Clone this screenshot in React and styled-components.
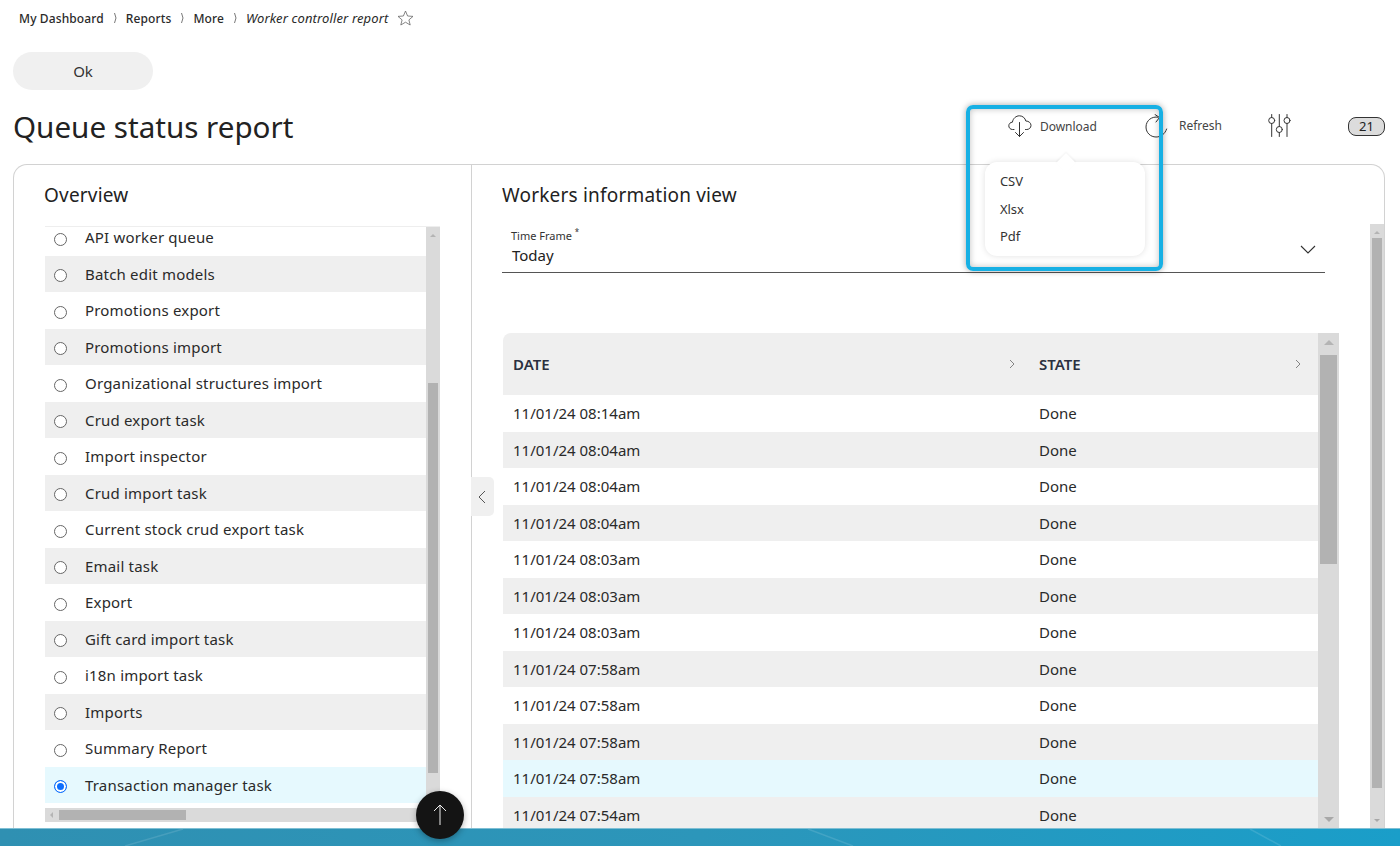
import React from 'react';
import styled, { createGlobalStyle } from 'styled-components';

const GlobalStyle = createGlobalStyle`
  html, body {
    margin: 0;
    height: 100%;
    overflow: hidden;
    background: #fff;
  }
  * {
    box-sizing: border-box;
  }
  body {
    font-family: "Noto Sans", "Open Sans", sans-serif;
    color: #222;
  }
`;

const Page = styled.div`
  position: relative;
  width: 1400px;
  height: 846px;
  overflow: hidden;
  padding: 0 15px 0 13px;
`;

const Breadcrumb = styled.nav`
  display: flex;
  align-items: center;
  height: 36px;
  padding-left: 6px;
  font-size: 12px;
  color: #2a2a2a;
`;

const Crumb = styled.span`
  font-weight: 500;
  letter-spacing: 0.01em;
`;

const CurrentCrumb = styled.span`
  font-size: 13px;
  font-style: italic;
  font-weight: 400;
  letter-spacing: 0.01em;
`;

const CrumbSep = styled.svg`
  width: 6px;
  height: 12px;
  margin: 0 7px 0 9px;
  fill: none;
  stroke: #555;
  stroke-width: 0.8;
`;

const StarIcon = styled.svg`
  width: 17px;
  height: 16px;
  margin-left: 9px;
  fill: none;
  stroke: #666;
  stroke-width: 0.8;
`;

const OkButton = styled.button`
  display: block;
  width: 140px;
  height: 38px;
  margin-top: 16px;
  border: 0;
  border-radius: 19px;
  background: #f0f0f0;
  color: #333;
  font: 400 15px "Noto Sans", sans-serif;
`;

const HeaderRow = styled.div`
  display: flex;
  justify-content: space-between;
  align-items: center;
  height: 74px;
  padding-bottom: 2px;
`;

const Title = styled.h1`
  margin: 0;
  font-size: 29.6px;
  font-weight: 400;
  color: #222;
`;

const Actions = styled.div`
  position: relative;
  display: flex;
  align-items: center;
  height: 40px;
`;

const Action = styled.div`
  display: flex;
  align-items: center;
  gap: ${(props) => props.$gap}px;
  margin-right: ${(props) => props.$right}px;
  font-size: 12px;
  color: #444;
`;

const RefreshLabel = styled.span`
  margin-top: -2px;
`;

const ActionIcon = styled.svg`
  fill: none;
  stroke: #333;
  stroke-width: 1;
  stroke-linecap: round;
  stroke-linejoin: round;
`;

const Badge = styled.span`
  display: flex;
  align-items: center;
  justify-content: center;
  width: 37px;
  height: 19px;
  border: 1px solid #333;
  border-radius: 8px;
  background: #dcdcdc;
  font-size: 13px;
  color: #222;
`;

const Highlight = styled.div`
  position: absolute;
  left: -42px;
  top: -1px;
  width: 197px;
  height: 166px;
  border: 4px solid #17b0e4;
  border-radius: 7px;
  box-shadow: 0 0 6px rgba(0, 0, 0, 0.35), inset 0 0 6px rgba(0, 0, 0, 0.25);
  z-index: 3;
  pointer-events: none;
`;

const Menu = styled.div`
  position: absolute;
  left: -23px;
  top: 56px;
  width: 160px;
  height: 94px;
  padding: 6px 15px;
  background: #fff;
  border-radius: 12px;
  box-shadow: 0 0 6px rgba(0, 0, 0, 0.12);
  z-index: 2;

  &::before {
    content: '';
    position: absolute;
    left: 74px;
    top: -6px;
    width: 14px;
    height: 14px;
    background: #fff;
    transform: rotate(45deg);
    box-shadow: -1px -1px 2px rgba(0, 0, 0, 0.05);
  }
`;

const MenuItem = styled.div`
  position: relative;
  height: 27.5px;
  line-height: 27px;
  font-size: 13px;
  color: #333;
`;

const Card = styled.section`
  display: flex;
  height: 670px;
  border: 1px solid #d2d2d2;
  border-bottom: 0;
  border-radius: 14px 14px 0 0;
  overflow: hidden;
`;

const LeftPanel = styled.div`
  position: relative;
  flex: 0 0 458px;
  padding-left: 31px;
  border-right: 1px solid #d2d2d2;
`;

const PanelTitle = styled.h2`
  display: flex;
  align-items: center;
  height: 61px;
  margin: 0 0 0 ${(props) => props.$shift || 0}px;
  padding-bottom: 2px;
  font-size: 19px;
  font-weight: 400;
  letter-spacing: 0.2px;
  color: #222;
`;

const ListFrame = styled.div`
  position: relative;
  width: 395px;
  height: 596px;
  overflow: hidden;
  border-top: 1px solid #eee;
`;

const ListScroll = styled.div`
  margin-top: -8px;
  width: 381px;
`;

const ListRow = styled.div`
  display: flex;
  align-items: center;
  height: 36.5px;
  padding-left: 9px;
  font-size: 15px;
  letter-spacing: 0.19px;
  color: #2a2a2a;
  background: ${(props) =>
    props.$selected ? '#e6f9fe' : props.$alt ? '#efefef' : '#fff'};
`;

const Radio = styled.span`
  flex: none;
  width: 13px;
  height: 13px;
  margin-right: 18px;
  margin-top: 4px;
  border-radius: 50%;
  border: 1px solid ${(props) => (props.$checked ? '#0d6efd' : '#666')};
  background: ${(props) => (props.$checked ? '#0d6efd' : '#fff')};
  box-shadow: ${(props) => (props.$checked ? 'inset 0 0 0 2px #fff' : 'none')};
`;

const VTrack = styled.div`
  position: absolute;
  top: 0;
  right: 0;
  bottom: 0;
  width: ${(props) => props.$width}px;
  background: #dadada;
`;

const Arrow = styled.span`
  position: absolute;
  left: 50%;
  margin-left: -${(props) => props.$size}px;
  width: 0;
  height: 0;
  border-left: ${(props) => props.$size}px solid transparent;
  border-right: ${(props) => props.$size}px solid transparent;
  ${(props) =>
    props.$down
      ? `bottom: 7px; border-top: ${props.$size}px solid #a8a8a8;`
      : `top: 7px; border-bottom: ${props.$size}px solid #b4b4b4;`}
`;

const VThumb = styled.div`
  position: absolute;
  left: 2px;
  right: 2px;
  top: ${(props) => props.$top}px;
  height: ${(props) => props.$height}px;
  background: #b2b2b2;
`;

const HTrack = styled.div`
  position: absolute;
  left: 0;
  bottom: 0;
  width: 381px;
  height: 14px;
  background: #dadada;
`;

const HArrow = styled.span`
  position: absolute;
  left: 5px;
  top: 4px;
  border-top: 3px solid transparent;
  border-bottom: 3px solid transparent;
  border-right: 3px solid #b4b4b4;
`;

const HThumb = styled.div`
  position: absolute;
  left: 14px;
  top: 2px;
  width: 127px;
  height: 10px;
  background: #b2b2b2;
`;

const CollapseTab = styled.div`
  position: absolute;
  right: -23px;
  top: 312px;
  width: 23px;
  height: 39px;
  display: flex;
  align-items: center;
  justify-content: center;
  background: #f0f0f0;
  border-radius: 0 5px 5px 0;
`;

const TabIcon = styled.svg`
  width: 8px;
  height: 14px;
  margin-right: 2px;
  fill: none;
  stroke: #555;
  stroke-width: 1;
`;

const RightPanel = styled.div`
  position: relative;
  flex: 1;
  padding-left: 30px;
`;

const FieldLabel = styled.div`
  margin-top: 2px;
  padding-left: 9px;
  font-size: 11px;
  line-height: 15px;
  color: #333;
  height: 15px;

  sup {
    font-size: 8px;
    line-height: 0;
  }
`;

const Field = styled.div`
  position: relative;
  width: 823px;
  height: 30px;
  border-bottom: 1px solid #555;
`;

const FieldValue = styled.div`
  padding: 1px 0 0 10px;
  font-size: 15px;
  line-height: 22px;
  color: #222;
`;

const FieldChevron = styled.svg`
  position: absolute;
  right: 9px;
  top: 2px;
  width: 16px;
  height: 9px;
  fill: none;
  stroke: #333;
  stroke-width: 1.1;
`;

const TableFrame = styled.div`
  position: relative;
  width: 836px;
  height: 496px;
  margin: 60px 0 0 1px;
  overflow: hidden;
  border-radius: 8px 0 0 0;
`;

const HeadRow = styled.div`
  display: grid;
  grid-template-columns: 526px 289px;
  width: 815px;
  height: 62px;
  background: #efefef;
`;

const HeadCell = styled.div`
  display: flex;
  align-items: center;
  justify-content: space-between;
  padding: 0 ${(props) => props.$right}px 0 10px;
  font-size: 15px;
  font-weight: 600;
  color: #2b3040;
`;

const SortIcon = styled.svg`
  width: 6px;
  height: 10px;
  fill: none;
  stroke: #777;
  stroke-width: 0.9;
`;

const BodyRow = styled.div`
  display: grid;
  grid-template-columns: 526px 289px;
  width: 815px;
  height: 36.5px;
  align-items: center;
  font-size: 15px;
  color: #2a2a2a;
  background: ${(props) =>
    props.$selected ? '#e6f9fe' : props.$alt ? '#efefef' : '#fff'};
`;

const BodyCell = styled.div`
  padding-left: 10px;
`;

const PageScroll = styled.div`
  position: absolute;
  right: 0;
  top: 59px;
  height: 605px;
  width: 14px;
  background: #dadada;
`;

const Footer = styled.div`
  position: absolute;
  left: 0;
  right: 0;
  bottom: 0;
  height: 18px;
  border-top: 1px solid #7fbfd4;
  background: linear-gradient(90deg, #2f90b2 0%, #2c96ba 50%, #1a9ec9 100%);
  z-index: 4;
`;

const FooterWaves = styled.svg`
  display: block;
  width: 1400px;
  height: 17px;
  fill: none;
  stroke: rgba(255, 255, 255, 0.12);
  stroke-width: 1.5;
`;

const ToTop = styled.div`
  position: absolute;
  left: 416px;
  top: 791px;
  width: 48px;
  height: 48px;
  display: flex;
  align-items: center;
  justify-content: center;
  border-radius: 50%;
  background: #141414;
  box-shadow: 0 2px 6px rgba(0, 0, 0, 0.3);
  z-index: 5;
`;

const ToTopIcon = styled.svg`
  width: 14px;
  height: 22px;
  fill: none;
  stroke: #eee;
  stroke-width: 1;
`;

const tasks = [
  'API worker queue',
  'Batch edit models',
  'Promotions export',
  'Promotions import',
  'Organizational structures import',
  'Crud export task',
  'Import inspector',
  'Crud import task',
  'Current stock crud export task',
  'Email task',
  'Export',
  'Gift card import task',
  'i18n import task',
  'Imports',
  'Summary Report',
  'Transaction manager task',
];

const rows = [
  '11/01/24 08:14am',
  '11/01/24 08:04am',
  '11/01/24 08:04am',
  '11/01/24 08:04am',
  '11/01/24 08:03am',
  '11/01/24 08:03am',
  '11/01/24 08:03am',
  '11/01/24 07:58am',
  '11/01/24 07:58am',
  '11/01/24 07:58am',
  '11/01/24 07:58am',
  '11/01/24 07:54am',
];

const Sep = () => (
  <CrumbSep viewBox="0 0 6 12">
    <path d="M1.5 1 Q4.5 6 1.5 11" />
  </CrumbSep>
);

const Sort = () => (
  <SortIcon viewBox="0 0 6 10">
    <path d="M1 1 L5 5 L1 9" />
  </SortIcon>
);

export default function App() {
  return (
    <Page>
      <GlobalStyle />
      <Breadcrumb>
        <Crumb>My Dashboard</Crumb>
        <Sep />
        <Crumb>Reports</Crumb>
        <Sep />
        <Crumb>More</Crumb>
        <Sep />
        <CurrentCrumb>Worker controller report</CurrentCrumb>
        <StarIcon viewBox="0 0 17 16">
          <path d="M8.5 1 L10.6 6 L16 6.4 L11.9 9.9 L13.2 15 L8.5 12.2 L3.8 15 L5.1 9.9 L1 6.4 L6.4 6 Z" />
        </StarIcon>
      </Breadcrumb>
      <OkButton>Ok</OkButton>
      <HeaderRow>
        <Title>Queue status report</Title>
        <Actions>
          <Highlight />
          <Action $gap={8} $right={48}>
            <ActionIcon width="24" height="24" viewBox="0 0 24 24">
              <path d="M6 15.5 H4.5 C2.2 15.5 0.8 13.6 0.8 11.8 C0.8 9.8 2.4 8.2 4.4 8.2 C5 4.4 8 1.8 11.4 1.8 C14.8 1.8 17.2 4.2 17.8 7 C20.8 7 23 9 23 11.4 C23 13.8 21 15.5 18.8 15.5 H17.5" />
              <path d="M11.5 8.5 V22.5 M7.5 18.5 L11.5 22.5 L15.5 18.5" />
            </ActionIcon>
            <span>Download</span>
          </Action>
          <Action $gap={11} $right={45}>
            <ActionIcon width="23" height="24" viewBox="0 0 23 24">
              <path d="M13 3.2 C7 2 1 6.4 1 13 C1 18.8 5.6 23 11 23 C16 23 20 20 21.6 15" />
              <path d="M10 0.5 L14.5 3.5 L11 8" />
            </ActionIcon>
            <RefreshLabel>Refresh</RefreshLabel>
          </Action>
          <Action $gap={0} $right={56}>
            <ActionIcon width="25" height="24" viewBox="0 0 25 24">
              <path d="M4.7 0.5 V3.5 M4.7 9.5 V22.5 M12.3 0.5 V12.5 M12.3 18.5 V22.5 M20 0.5 V3.5 M20 9.5 V22.5" />
              <circle cx="4.7" cy="6.5" r="3" />
              <circle cx="12.3" cy="15.5" r="3" />
              <circle cx="20" cy="6.5" r="3" />
            </ActionIcon>
          </Action>
          <Badge>21</Badge>
          <Menu>
            <MenuItem>CSV</MenuItem>
            <MenuItem>Xlsx</MenuItem>
            <MenuItem>Pdf</MenuItem>
          </Menu>
        </Actions>
      </HeaderRow>
      <Card>
        <LeftPanel>
          <PanelTitle $shift={-1}>Overview</PanelTitle>
          <ListFrame>
            <ListScroll>
              {tasks.map((task, index) => (
                <ListRow
                  key={task}
                  $alt={index % 2 === 1}
                  $selected={index === tasks.length - 1}
                >
                  <Radio $checked={index === tasks.length - 1} />
                  {task}
                </ListRow>
              ))}
            </ListScroll>
            <VTrack $width={14}>
              <Arrow $size={3} />
              <VThumb $top={156} $height={390} />
            </VTrack>
            <HTrack>
              <HArrow />
              <HThumb />
            </HTrack>
          </ListFrame>
          <CollapseTab>
            <TabIcon viewBox="0 0 8 14">
              <path d="M7 1 L1 7 L7 13" />
            </TabIcon>
          </CollapseTab>
        </LeftPanel>
        <RightPanel>
          <PanelTitle>Workers information view</PanelTitle>
          <FieldLabel>
            Time Frame <sup>*</sup>
          </FieldLabel>
          <Field>
            <FieldValue>Today</FieldValue>
            <FieldChevron viewBox="0 0 16 9">
              <path d="M1 1 L8 8 L15 1" />
            </FieldChevron>
          </Field>
          <TableFrame>
            <HeadRow>
              <HeadCell $right={14}>
                DATE
                <Sort />
              </HeadCell>
              <HeadCell $right={17}>
                STATE
                <Sort />
              </HeadCell>
            </HeadRow>
            {rows.map((date, index) => (
              <BodyRow key={index} $alt={index % 2 === 1} $selected={index === 10}>
                <BodyCell>{date}</BodyCell>
                <BodyCell>Done</BodyCell>
              </BodyRow>
            ))}
            <VTrack $width={21}>
              <Arrow $size={5} />
              <Arrow $size={5} $down />
              <VThumb $top={22} $height={209} />
            </VTrack>
          </TableFrame>
          <PageScroll>
            <Arrow $size={3} />
            <Arrow $size={3} $down />
            <VThumb $top={14} $height={550} />
          </PageScroll>
        </RightPanel>
      </Card>
      <ToTop>
        <ToTopIcon viewBox="0 0 14 22">
          <path d="M7 21 V1 M1 7 L7 1 L13 7" />
        </ToTopIcon>
      </ToTop>
      <Footer>
        <FooterWaves viewBox="0 0 1400 17">
          <path d="M125 17 L183 0 M808 0 L853 17 M1250 0 L1281 17" />
        </FooterWaves>
      </Footer>
    </Page>
  );
}
